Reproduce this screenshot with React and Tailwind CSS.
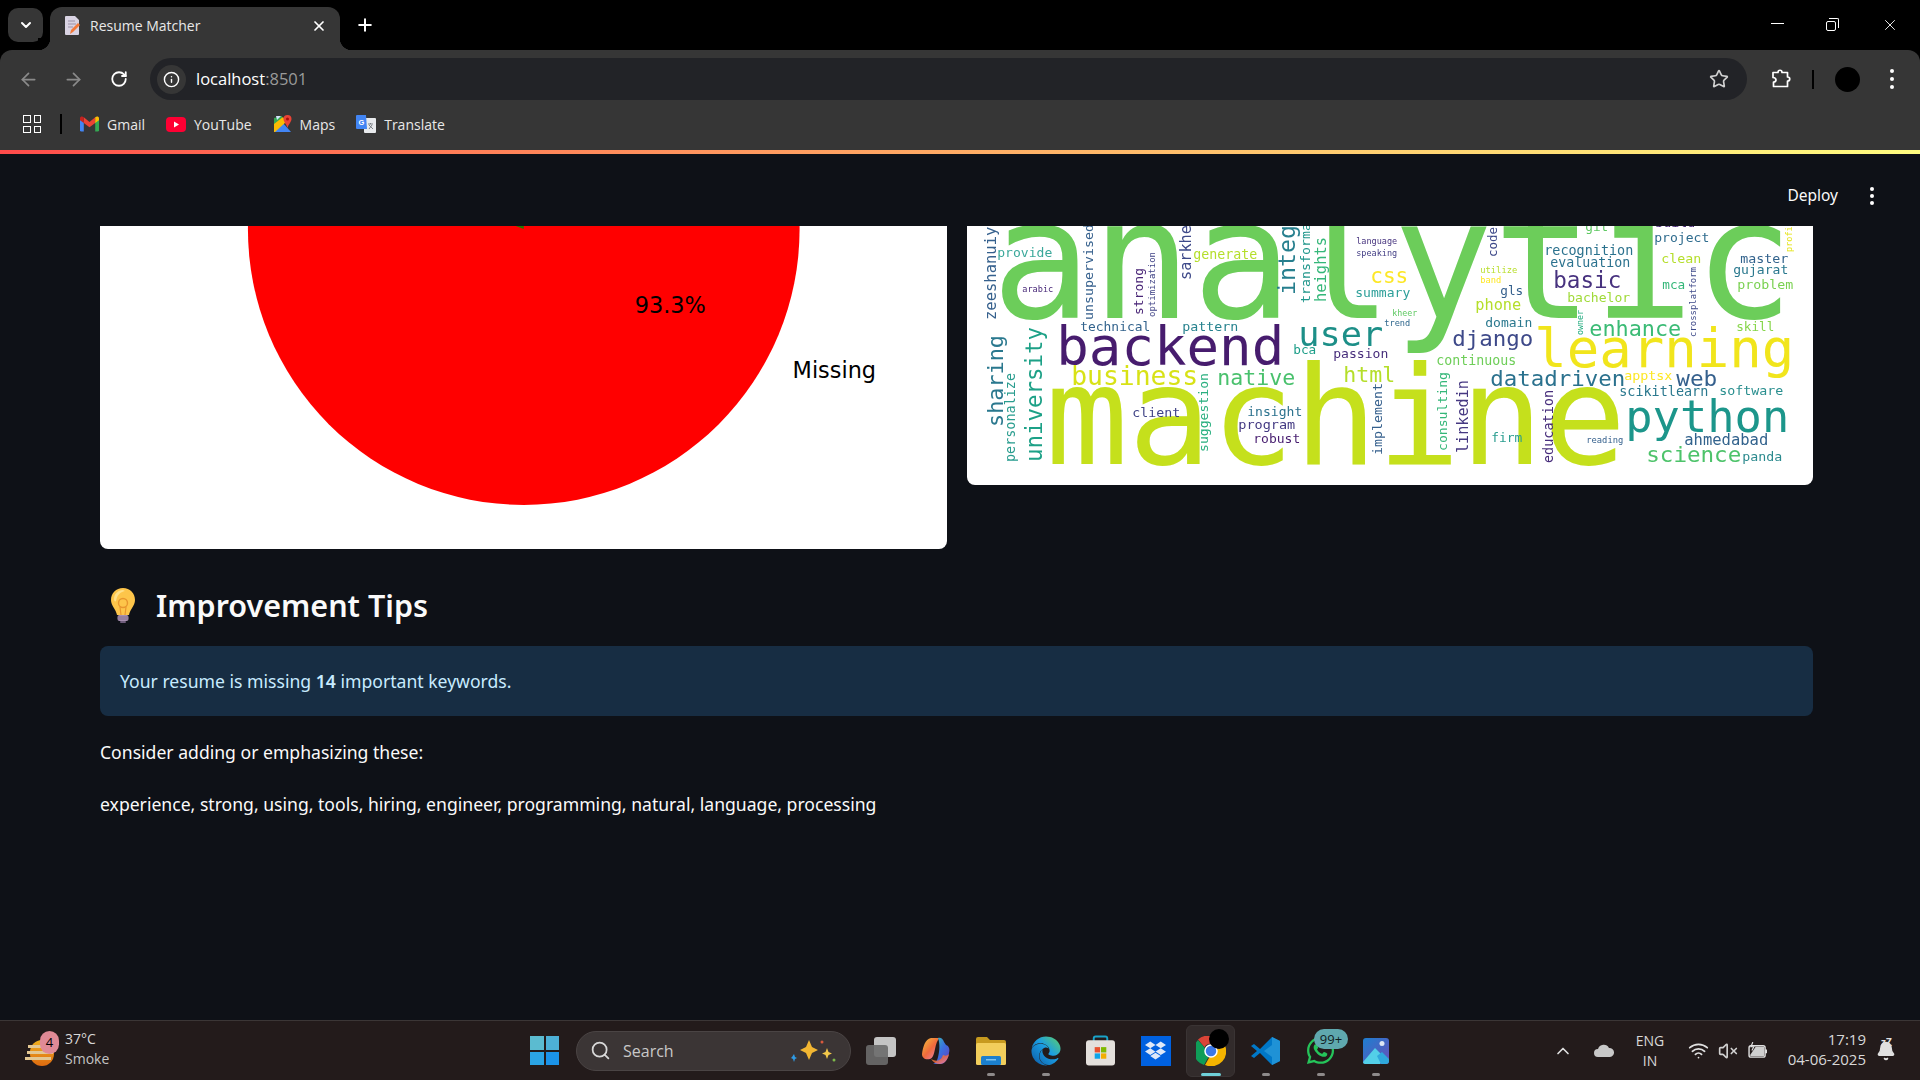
import React from 'react';
import { ChevronDown, ChevronUp, X, Plus, ArrowLeft, ArrowRight, RotateCw, Info, Star, Search, Wifi, VolumeX, Bell } from 'lucide-react';
import { FaWhatsapp, FaDropbox, FaEdge } from 'react-icons/fa';

// word cloud: [text, left x, baseline y, width, font size, colour]
const flatWords = [
  ['analytic', 991, 318, 803, 167, '#6ccd5a'],
  ['machine', 1045, 464, 581, 138, '#c5e01b'],
  ['backend', 1056, 365, 228, 54, '#471d6e'],
  ['user', 1298, 346, 85, 34, '#1f8f88'],
  ['provide', 997, 257, 55, 13, '#3aa89a'],
  ['generate', 1193, 259, 64, 13.3, '#b5de2b'],
  ['css', 1370, 283, 38, 21, '#fde725'],
  ['summary', 1355, 297, 55, 13, '#2ea09a'],
  ['language', 1356, 244, 41, 8.5, '#46337e'],
  ['speaking', 1356, 256, 41, 8.5, '#433e85'],
  ['arabic', 1022, 292, 31, 8.5, '#482878'],
  ['technical', 1080, 331, 70, 13, '#33638d'],
  ['pattern', 1182, 331, 56, 13, '#26828e'],
  ['bca', 1293, 354, 23, 13, '#1f9e89'],
  ['passion', 1333, 358, 55, 13, '#472d7b'],
  ['kheer', 1392, 316, 25, 8.5, '#5ec962'],
  ['trend', 1384, 326, 26, 8.5, '#31688e'],
  ['business', 1071, 385, 127, 26.5, '#d8e219'],
  ['native', 1217, 385, 78, 22, '#4ac16d'],
  ['html', 1343, 382, 52, 22, '#b5de2b'],
  ['client', 1132, 417, 48, 13, '#414487'],
  ['insight', 1247, 416, 55, 13, '#2c728e'],
  ['program', 1238, 429, 57, 13, '#443a83'],
  ['robust', 1253, 443, 47, 13, '#481f70'],
  ['git', 1585, 231, 23, 13, '#5ec962'],
  ['build', 1655, 227, 40, 13, '#482878'],
  ['project', 1654, 242, 55, 13, '#2f6c8e'],
  ['recognition', 1544, 255, 89, 13.4, '#2c728e'],
  ['evaluation', 1550, 267, 80, 13.4, '#2c728e'],
  ['clean', 1661, 263, 40, 13, '#b5de2b'],
  ['master', 1740, 263, 48, 13, '#33638d'],
  ['gujarat', 1733, 274, 55, 13, '#2a788e'],
  ['problem', 1737, 289, 56, 13, '#7ad151'],
  ['basic', 1553, 288, 68, 23, '#46307e'],
  ['utilize', 1480, 273, 37, 8.5, '#b8de29'],
  ['band', 1480, 283, 21, 8.5, '#fde725'],
  ['gls', 1500, 295, 23, 13, '#35608d'],
  ['mca', 1662, 289, 23, 13, '#35b779'],
  ['bachelor', 1567, 302, 63, 13, '#a0da39'],
  ['phone', 1475, 310, 46, 15, '#b5de2b'],
  ['domain', 1485, 327, 47, 13, '#2a788e'],
  ['enhance', 1589, 336, 92, 22, '#3bbb75'],
  ['skill', 1736, 331, 38, 13, '#86d549'],
  ['django', 1452, 346, 81, 22, '#3e4989'],
  ['learning', 1534, 367, 260, 53, '#f1e51d'],
  ['continuous', 1436, 365, 80, 13.3, '#6ece58'],
  ['datadriven', 1490, 386, 135, 22, '#2c728e'],
  ['apptsx', 1624, 380, 48, 13, '#fde725'],
  ['web', 1676, 386, 41, 22, '#35608d'],
  ['scikitlearn', 1619, 396, 89, 13.4, '#2a788e'],
  ['software', 1719, 395, 64, 13, '#2a8f8f'],
  ['python', 1625, 432, 164, 45, '#1f968b'],
  ['ahmedabad', 1684, 445, 84, 15.5, '#33638d'],
  ['firm', 1491, 442, 31, 13, '#2a9d8f'],
  ['reading', 1586, 443, 37, 8.8, '#35608d'],
  ['science', 1646, 462, 95, 22, '#4ec36b'],
  ['panda', 1742, 461, 40, 13, '#2c8a8e'],
];

// rotated words: [text, baseline x, start y, length, font size, colour]
const upWords = [
  ['zeeshanuiyat', 996, 320, 112, 15.5, '#35608d'],
  ['sharing', 1003, 427, 92, 22, '#2a788e'],
  ['personalize', 1015, 462, 89, 13.4, '#2a9d8f'],
  ['university', 1042, 462, 135, 22.4, '#1fa187'],
  ['unsupervised', 1093, 320, 96, 13, '#35608d'],
  ['strong', 1143, 315, 47, 13, '#482576'],
  ['optimization', 1155, 317, 65, 9, '#414487'],
  ['sarkhej', 1191, 280, 64, 15, '#3e4989'],
  ['integrate', 1295, 295, 126, 23, '#277f8e'],
  ['transformation', 1310, 303, 112, 13, '#1f968b'],
  ['heights', 1326, 302, 65, 15.5, '#35b779'],
  ['suggestion', 1208, 452, 79, 13, '#29af7f'],
  ['implement', 1382, 455, 72, 13, '#35608d'],
  ['consulting', 1447, 451, 79, 13, '#35b779'],
  ['linkedin', 1468, 453, 73, 15, '#453781'],
  ['education', 1553, 463, 73, 13.5, '#472d7b'],
  ['code', 1497, 257, 30, 13, '#3e4989'],
  ['owner', 1583, 335, 25, 8.5, '#26ad81'],
  ['crossplatform', 1696, 337, 70, 9, '#3e4989'],
  ['profile', 1792, 252, 36, 8.5, '#e5e419'],
];

const WordCloud = () => (
  <svg viewBox="967 226 846 259" className="block w-full h-full">
    <defs>
      <filter id="soft" x="-5%" y="-5%" width="110%" height="110%">
        <feGaussianBlur stdDeviation="0.6" />
      </filter>
    </defs>
    <g filter="url(#soft)" fontFamily="'DejaVu Sans Mono', monospace">
      {flatWords.map(([t, x, y, w, s, c]) => (
        <text key={t} x={x} y={y} fontSize={s} fill={c} textLength={w} lengthAdjust="spacingAndGlyphs">{t}</text>
      ))}
      {upWords.map(([t, x, y, w, s, c]) => (
        <text key={t} transform={`translate(${x} ${y}) rotate(-90)`} fontSize={s} fill={c} textLength={w} lengthAdjust="spacingAndGlyphs">{t}</text>
      ))}
    </g>
  </svg>
);

const PieChart = () => (
  <svg viewBox="100 226 847 323" className="block w-full h-full">
    <circle cx="524" cy="229" r="276" fill="#ff0000" />
    <path d="M524 229 L524 226 L516 226 Z" fill="#1f7a00" />
    <g fontFamily="'DejaVu Sans', sans-serif" fontSize="22.4" fill="#000">
      <text x="635" y="313">93.3%</text>
      <text x="793" y="378">Missing</text>
    </g>
  </svg>
);

const Bulb = () => (
  <svg viewBox="0 0 26 36" className="w-[26px] h-[36px]">
    <path d="M13 1C6 1 1 6 1 13c0 6 5 9 6 15h12c1-6 6-9 6-15C25 6 20 1 13 1z" fill="#fdc54a" />
    <path d="M13 3c-5 0-9 4-9 9 0 2 1 3 2 2 1-6 4-9 9-10z" fill="#ffe08a" />
    <circle cx="13" cy="16" r="4.5" fill="none" stroke="#e8962e" strokeWidth="1.4" />
    <path d="M10 20l1 8M16 20l-1 8" stroke="#e8962e" strokeWidth="1.2" />
    <rect x="7.5" y="28" width="11" height="6" rx="2" fill="#a78fb0" />
    <path d="M8 30h10M8 32h10" stroke="#7d6a88" strokeWidth="0.8" />
    <rect x="10" y="34" width="6" height="2" rx="1" fill="#6f5d7c" />
  </svg>
);

const Gmail = () => (
  <svg viewBox="0 0 20 16" className="w-[19px] h-[16px]">
    <path d="M0 2v12.500A1.500 1.500 0 0 0 1.500 16H4V6z" fill="#4285f4" />
    <path d="M20 2v12.500a1.500 1.500 0 0 1-1.500 1.500H16V6z" fill="#34a853" />
    <path d="M4 7V1L10 6l6-5v6l-6 4.500z" fill="#ea4335" />
    <path d="M0 2c0-2 2.500-2.600 4-1v6L0 4z" fill="#c5221f" />
    <path d="M20 2c0-2-2.500-2.600-4-1v6l4-3z" fill="#fbbc04" />
  </svg>
);

const YouTube = () => (
  <svg viewBox="0 0 20 15" className="w-[20px] h-[15px]">
    <rect width="20" height="15" rx="4" fill="#ff0033" />
    <path d="M8 4.500l5 3-5 3z" fill="#fff" />
  </svg>
);

const Maps = () => (
  <svg viewBox="0 0 18 18" className="w-[18px] h-[18px]">
    <path d="M0 3l8-2v16l-8 0z" fill="#34a853" />
    <path d="M0 17L9 8l8 9z" fill="#4285f4" />
    <path d="M0 9l9-7 3 5L1 17H0z" fill="#fbbc04" />
    <path d="M2 1l5 0-4 4z" fill="#d2e3fc" />
    <path d="M13.500 0a4 4 0 0 1 4 4c0 3-3 5-4 9-1-4-4-6-4-9a4 4 0 0 1 4-4z" fill="#ea4335" />
    <circle cx="13.500" cy="4" r="1.500" fill="#a50e0e" />
  </svg>
);

const Translate = () => (
  <svg viewBox="0 0 20 18" className="w-[20px] h-[18px]">
    <rect x="8" y="3" width="12" height="15" rx="1" fill="#e8eaed" />
    <path d="M12 9h5M14.500 8v1M13 14l3-4M13 10l4 4" stroke="#70757a" strokeWidth="0.9" fill="none" />
    <path d="M1 0h9l1 14H1a1 1 0 0 1-1-1V1a1 1 0 0 1 1-1z" fill="#4285f4" />
    <text x="2.500" y="9.500" fontSize="7.500" fontWeight="700" fontFamily="'Liberation Sans', sans-serif" fill="#fff">G</text>
  </svg>
);

const TabIcon = () => (
  <svg viewBox="0 0 15 19" className="w-[15px] h-[19px]">
    <path d="M1 0h9l4 4v14a1 1 0 0 1-1 1H1a1 1 0 0 1-1-1V1a1 1 0 0 1 1-1z" fill="#d9d3e3" />
    <path d="M3 5h7M3 8h8M3 11h5" stroke="#9b91a8" strokeWidth="1" />
    <path d="M5 18l1-4 7-7 2 2-7 7z" fill="#f2793a" />
  </svg>
);

const Puzzle = () => (
  <svg viewBox="0 0 20 20" className="w-[20px] h-[20px]" fill="none" stroke="#fff" strokeWidth="1.7" strokeLinejoin="round">
    <path d="M2 3.500h5c0-3 4-3 4 0h5.500V8c3 0 3 4 0 4v5.500H2.500V13c2 0 2.500-1 2.500-2s-1-2.500-3-2.500z" />
  </svg>
);

const Dots = ({ gap = 'gap-[4px]', size = 'w-[4px] h-[4px]' }) => (
  <div className={`flex flex-col ${gap}`}>
    <span className={`${size} rounded-full bg-white`} />
    <span className={`${size} rounded-full bg-white`} />
    <span className={`${size} rounded-full bg-white`} />
  </div>
);

const Bookmark = ({ icon, label, className }) => (
  <div className={`flex items-center gap-[8px] text-[14px] text-[#e8e8e8] ${className}`}>
    {icon}
    <span>{label}</span>
  </div>
);

const TabStrip = () => (
  <div className="h-[50px] bg-black flex relative shrink-0">
    <div className="w-[35px] h-[34px] mt-[8px] ml-[8px] rounded-[10px] bg-[#363636] flex items-center justify-center">
      <ChevronDown size={16} strokeWidth={3} color="#fff" />
    </div>
    <div className="relative w-[290px] h-[43px] mt-[7px] ml-[7px] rounded-t-[12px] bg-[#363636] flex items-center pl-[15px] pr-[13px] pb-[6px]">
      <TabIcon />
      <span className="ml-[10px] flex-1 text-[14px] text-[#e8e8e8]">Resume Matcher</span>
      <X size={16} strokeWidth={2.6} color="#fff" />
      <span className="absolute left-[-12px] bottom-0 w-[12px] h-[12px] bg-[radial-gradient(circle_at_0_0,#000_12px,#363636_12.500px)]" />
      <span className="absolute right-[-12px] bottom-0 w-[12px] h-[12px] bg-[radial-gradient(circle_at_100%_0,#000_12px,#363636_12.500px)]" />
    </div>
    <div className="ml-[15px] mt-[15px] h-[20px]">
      <Plus size={20} strokeWidth={2.4} color="#fff" />
    </div>
    <div className="ml-auto flex items-start pt-[16px] pr-[21px] gap-[42px]">
      <span className="w-[13px] h-[1px] bg-white mt-[7px]" />
      <span className="relative w-[13px] h-[13px] mt-[2px]">
        <span className="absolute left-0 bottom-0 w-[10px] h-[10px] border border-white rounded-[2px]" />
        <span className="absolute right-0 top-0 w-[10px] h-[10px] border-t border-r border-white rounded-tr-[2px]" />
      </span>
      <X size={18} strokeWidth={1.2} color="#fff" />
    </div>
  </div>
);

const Toolbar = () => (
  <div className="h-[100px] bg-[#363636] rounded-t-[12px] shrink-0 flex flex-col">
    <div className="h-[50px] flex items-center pt-[8px] pl-[18px] pr-[18px]">
      <ArrowLeft size={21} color="#8a8a8a" />
      <ArrowRight size={21} color="#8a8a8a" className="ml-[24px]" />
      <RotateCw size={18} strokeWidth={2.4} color="#fff" className="ml-[26px]" />
      <div className="ml-[22px] w-[1597px] h-[42px] rounded-full bg-[#222327] flex items-center pl-[7px] pr-[18px]">
        <div className="w-[29px] h-[29px] rounded-full bg-[#363636] flex items-center justify-center">
          <Info size={17} color="#fff" />
        </div>
        <span className="ml-[10px] text-[16.500px] text-white">localhost<span className="text-[#9a9a9a]">:8501</span></span>
        <Star size={20} color="#d0d0d0" className="ml-auto" />
      </div>
      <div className="ml-[24px]"><Puzzle /></div>
      <span className="ml-[21px] w-[2px] h-[19px] bg-black" />
      <span className="ml-[21px] w-[25px] h-[25px] rounded-full bg-black" />
      <div className="ml-[30px]"><Dots gap="gap-[4px]" /></div>
    </div>
    <div className="flex-1 flex items-center pl-[23px] pb-[2px]">
      <div className="grid grid-cols-2 gap-[3px] w-[18px]">
        {[0, 1, 2, 3].map((i) => <span key={i} className="h-[7.500px] border-[1.500px] border-white" />)}
      </div>
      <span className="ml-[19px] w-[2px] h-[20px] bg-black" />
      <Bookmark icon={<Gmail />} label="Gmail" className="ml-[18px]" />
      <Bookmark icon={<YouTube />} label="YouTube" className="ml-[21px]" />
      <Bookmark icon={<Maps />} label="Maps" className="ml-[22px]" />
      <Bookmark icon={<Translate />} label="Translate" className="ml-[21px]" />
    </div>
  </div>
);

const AppArea = () => (
  <main className="flex-1 min-h-0 bg-[#0e1117] overflow-hidden text-[#fafafa] font-['Noto_Sans',sans-serif]">
    <div className="h-[4px] bg-gradient-to-r from-[#ff4b4b] to-[#fffd80]" />
    <div className="h-[72px] flex items-center justify-end pr-[46px] pt-[12px]">
      <span className="text-[15.500px]">Deploy</span>
      <div className="ml-[32px]"><Dots gap="gap-[3px]" /></div>
    </div>
    <div className="pl-[100px] pr-[107px]">
      <div className="grid grid-cols-2 gap-[20px] items-start">
        <div className="h-[323px] bg-white rounded-b-lg overflow-hidden"><PieChart /></div>
        <div className="h-[259px] bg-white rounded-b-lg overflow-hidden"><WordCloud /></div>
      </div>
      <div className="mt-[37px] flex items-center pl-[10px] h-[38px]">
        <Bulb />
        <h3 className="ml-[20px] text-[30.500px] font-semibold leading-none">Improvement Tips</h3>
      </div>
      <div className="mt-[22px] h-[70px] rounded-lg bg-[#172d43] text-[#c7ebff] text-[17.600px] flex items-center pl-[20px]">
        <p>Your resume is missing <b className="font-semibold">14</b> important keywords.</p>
      </div>
      <p className="mt-[24px] text-[17.600px] leading-[24px]">Consider adding or emphasizing these:</p>
      <p className="mt-[28px] text-[17.600px] leading-[24px]">experience, strong, using, tools, hiring, engineer, programming, natural, language, processing</p>
    </div>
  </main>
);

const Slot = ({ children, dot }) => (
  <div className="relative w-[55px] h-[60px] flex items-center justify-center">
    {children}
    {dot && <span className="absolute bottom-[5px] w-[8px] h-[3px] rounded-full bg-[#8e8a8a]" />}
  </div>
);

const WinLogo = () => (
  <div className="grid grid-cols-2 gap-[2px] w-[29px] h-[29px]">
    <span className="bg-[#5bbbd0]" />
    <span className="bg-[#4db0d6]" />
    <span className="bg-[#2ba4e4]" />
    <span className="bg-[#1b93e8]" />
  </div>
);

const Chrome = () => (
  <svg viewBox="0 0 30 30" className="w-[30px] h-[30px]">
    <path d="M15 0a15 15 0 0 1 13 7.500H15a7.500 7.500 0 0 0-6.500 3.750L2 3.500A15 15 0 0 1 15 0z" fill="#db4437" />
    <path d="M2 4a15 15 0 0 0 6 25l6.500-11.500a7.500 7.500 0 0 1-6-6z" fill="#0f9d58" />
    <path d="M28 7.500A15 15 0 0 1 9 29l6.500-11.500a7.500 7.500 0 0 0 6-10z" fill="#f4b400" />
    <circle cx="15" cy="15" r="6" fill="#3b78e7" stroke="#fff" strokeWidth="1.500" />
  </svg>
);

const VsCode = () => (
  <svg viewBox="0 0 30 30" className="w-[30px] h-[30px]">
    <path d="M21 1l8 4v20l-8 4L9 17l-6 5-3-2 6-5-6-5 3-2 6 5z" fill="#0078c8" />
    <path d="M21 1l8 4v20l-8 4zM21 9l-8 6 8 6z" fill="#1f92d6" fillRule="evenodd" />
  </svg>
);

const Explorer = () => (
  <svg viewBox="0 0 30 28" className="w-[30px] h-[28px]">
    <path d="M0 2a2 2 0 0 1 2-2h9l3 3h14a2 2 0 0 1 2 2v3H0z" fill="#c79a1f" />
    <rect y="6" width="30" height="22" rx="1.500" fill="#f2ce5c" />
    <rect x="5" y="19" width="20" height="9" rx="1.500" fill="#1b7fce" />
    <rect x="10" y="22" width="10" height="1.500" fill="#7cc3f0" />
  </svg>
);

const Store = () => (
  <svg viewBox="0 0 30 31" className="w-[29px] h-[31px]">
    <path d="M8 6V3a2 2 0 0 1 2-2h10a2 2 0 0 1 2 2v3" fill="none" stroke="#19a3c9" strokeWidth="2" />
    <rect y="5" width="30" height="26" rx="3" fill="#e4e0dc" />
    <rect x="9" y="12" width="5.500" height="5.500" fill="#e8512e" />
    <rect x="15.500" y="12" width="5.500" height="5.500" fill="#7fb900" />
    <rect x="9" y="18.500" width="5.500" height="5.500" fill="#0ea5e9" />
    <rect x="15.500" y="18.500" width="5.500" height="5.500" fill="#f2ae00" />
  </svg>
);

const Copilot = () => (
  <svg viewBox="0 0 28 28" className="w-[28px] h-[28px]">
    <defs>
      <linearGradient id="cpA" x1="0" y1="0" x2="1" y2="1">
        <stop offset="0" stopColor="#38c6b0" />
        <stop offset="0.5" stopColor="#3a6fe0" />
        <stop offset="1" stopColor="#6b3fb5" />
      </linearGradient>
      <linearGradient id="cpB" x1="0" y1="0" x2="1" y2="1">
        <stop offset="0" stopColor="#f5c23c" />
        <stop offset="0.5" stopColor="#f06a3c" />
        <stop offset="1" stopColor="#e887c8" />
      </linearGradient>
    </defs>
    <path d="M9 1h9c-3 2-4 6-5 11-1 5-2 9-5 10-5 1-8-1-8-5C1 10 3 2 9 1z" fill="url(#cpB)" />
    <path d="M16 1c3-1 5 1 6 4l2 3c3 1 4 4 3 8-1 6-4 11-9 11h-7c4-1 5-6 6-12 1-6 0-12-1-14z" fill="url(#cpA)" />
    <path d="M9 22c2 3 5 5 9 5 4 0 8-4 9-10-2 2-4 2-6 1-1 4-5 8-12 4z" fill="url(#cpB)" opacity="0.85" />
  </svg>
);

const Photos = () => (
  <svg viewBox="0 0 26 26" className="w-[26px] h-[26px]">
    <defs>
      <linearGradient id="phBg" x1="0" y1="0" x2="1" y2="1">
        <stop offset="0" stopColor="#1d7fd0" />
        <stop offset="1" stopColor="#6a4fb8" />
      </linearGradient>
    </defs>
    <rect width="26" height="26" rx="3" fill="url(#phBg)" />
    <circle cx="19" cy="5.500" r="2.500" fill="#dfe7f5" />
    <path d="M0 24l12-14 9 9-4 7H2a2 2 0 0 1-2-2z" fill="#53cfe8" />
    <path d="M14 18l5-4 7 7v2a3 3 0 0 1-3 3h-5z" fill="#2fa8dc" />
  </svg>
);

const Sparkle = () => (
  <svg viewBox="0 0 50 26" className="w-[50px] h-[26px]">
    <path d="M2 19l2-3 1 3 2 1-2 1-1 3-1-3-2-1z" fill="#2e9be6" />
    <path d="M19 2l3 7 6 3-6 3-3 7-3-7-6-3 6-3z" fill="#f2b632" />
    <path d="M37 10l1.500 4 3.500 1.500-3.500 1.500L37 21l-1.500-4-3.500-1.500 3.500-1.500z" fill="#f2c84a" />
    <circle cx="32" cy="4" r="1.500" fill="#d9593d" />
    <circle cx="44" cy="22" r="1.500" fill="#7db84a" />
  </svg>
);

const Weather = () => (
  <div className="relative w-[40px] h-[40px]">
    <span className="absolute left-[5px] top-[9px] w-[24px] h-[26px] rounded-full bg-[linear-gradient(#f0b11f,#dd6a10)]" />
    <span className="absolute left-[3px] top-[14px] w-[22px] h-[3px] bg-[#e3c792]" />
    <span className="absolute left-[2px] top-[20px] w-[26px] h-[3px] bg-[#e3c792]" />
    <span className="absolute left-[0px] top-[26px] w-[26px] h-[3px] bg-[#e3c792]" />
    <span className="absolute left-[15px] top-[0px] w-[19px] h-[23px] rounded-full bg-[#e08a96] text-black text-[13px] leading-[23px] text-center">4</span>
  </div>
);

const Taskbar = () => (
  <footer className="h-[60px] bg-[#231b1b] border-t border-[#3b3636] shrink-0 flex items-center text-[#d8d8d8] font-['Open_Sans',sans-serif]">
    <div className="ml-[25px] w-[492px] flex items-center">
      <Weather />
      <div className="text-[14px] leading-[20px] -mt-[3px]">
        <div>37°C</div>
        <div className="text-[#c4c4c4]">Smoke</div>
      </div>
    </div>
    <Slot><WinLogo /></Slot>
    <div className="ml-[4px] w-[275px] h-[40px] rounded-full bg-[#3b3535] border border-[#4a4444] flex items-center pl-[13px] pr-[10px]">
      <Search size={21} color="#d8d8d8" />
      <span className="ml-[12px] text-[16px] text-[#c8c8c8]">Search</span>
      <span className="ml-auto"><Sparkle /></span>
    </div>
    <div className="ml-[2px] flex">
      <Slot>
        <div className="relative w-[30px] h-[28px]">
          <span className="absolute right-0 top-0 w-[22px] h-[20px] rounded-[3px] bg-[#c4c4c4]" />
          <span className="absolute left-0 bottom-0 w-[22px] h-[20px] rounded-[3px] bg-[#6c6c6c]/90" />
        </div>
      </Slot>
      <Slot><Copilot /></Slot>
      <Slot dot><Explorer /></Slot>
      <Slot dot>
        <svg className="absolute w-0 h-0">
          <defs>
            <linearGradient id="edgeFill" x1="0" y1="1" x2="1" y2="0">
              <stop offset="0" stopColor="#0c59a4" />
              <stop offset="0.55" stopColor="#1b9de2" />
              <stop offset="1" stopColor="#5fd068" />
            </linearGradient>
          </defs>
        </svg>
        <FaEdge size={30} fill="url(#edgeFill)" />
      </Slot>
      <Slot><Store /></Slot>
      <Slot>
        <div className="w-[30px] h-[30px] bg-[#0061e0] flex items-center justify-center"><FaDropbox size={21} color="#dfe9f8" /></div>
      </Slot>
      <Slot>
        <div className="absolute inset-x-[3px] top-[4px] bottom-[4px] rounded-[6px] bg-[#322b2b] border border-[#3a3434]" />
        <div className="relative"><Chrome /></div>
        <span className="absolute top-[8px] left-[26px] w-[20px] h-[20px] rounded-full bg-black" />
        <span className="absolute bottom-[5px] w-[20px] h-[3px] rounded-full bg-[#6fd0d8]" />
      </Slot>
      <Slot dot><VsCode /></Slot>
      <Slot dot>
        <FaWhatsapp size={31} color="#25c45a" />
        <span className="absolute left-[21px] top-[8px] w-[34px] h-[20px] rounded-full bg-[#5fa8ae] text-[#10201f] text-[13px] leading-[20px] text-center">99+</span>
      </Slot>
      <Slot dot><Photos /></Slot>
    </div>
    <div className="ml-auto flex items-center pr-[24px]">
      <ChevronUp size={20} color="#e0e0e0" />
      <svg viewBox="0 0 20 13" className="ml-[21px] w-[20px] h-[13px]">
        <path d="M4 13a4 4 0 0 1 0-8 6 6 0 0 1 11-1 4.500 4.500 0 0 1 1 9z" fill="#c8c8c8" />
      </svg>
      <div className="ml-[18px] w-[36px] text-center text-[14px] leading-[20px]">
        <div>ENG</div>
        <div>IN</div>
      </div>
      <Wifi size={21} color="#e0e0e0" className="ml-[20px]" />
      <VolumeX size={20} color="#d0d0d0" className="ml-[9px]" />
      <svg viewBox="0 0 22 18" className="ml-[10px] w-[21px] h-[17px]" fill="none" stroke="#e0e0e0" strokeWidth="1.500">
        <rect x="1" y="4" width="17" height="12" rx="2" />
        <path d="M19 8v4" strokeWidth="2" />
        <path d="M2 14l6-9h9v10H3z" fill="#cfcfcf" stroke="none" />
        <path d="M5 0L3 5h3L4 9" strokeWidth="1.200" />
      </svg>
      <div className="ml-[13px] w-[84px] text-right text-[15px] leading-[20px] -mt-[4px]">
        <div>17:19</div>
        <div>04-06-2025</div>
      </div>
      <div className="relative ml-[10px]">
        <Bell size={20} fill="#e0e0e0" color="#e0e0e0" />
        <span className="absolute left-[5px] top-[-4px] text-[10px] font-bold text-[#e0e0e0] leading-none">zZ</span>
      </div>
    </div>
  </footer>
);

export default function App() {
  return (
    <div className="w-[1920px] h-[1080px] overflow-hidden flex flex-col bg-black font-['Open_Sans',sans-serif]">
      <TabStrip />
      <Toolbar />
      <AppArea />
      <Taskbar />
    </div>
  );
}
